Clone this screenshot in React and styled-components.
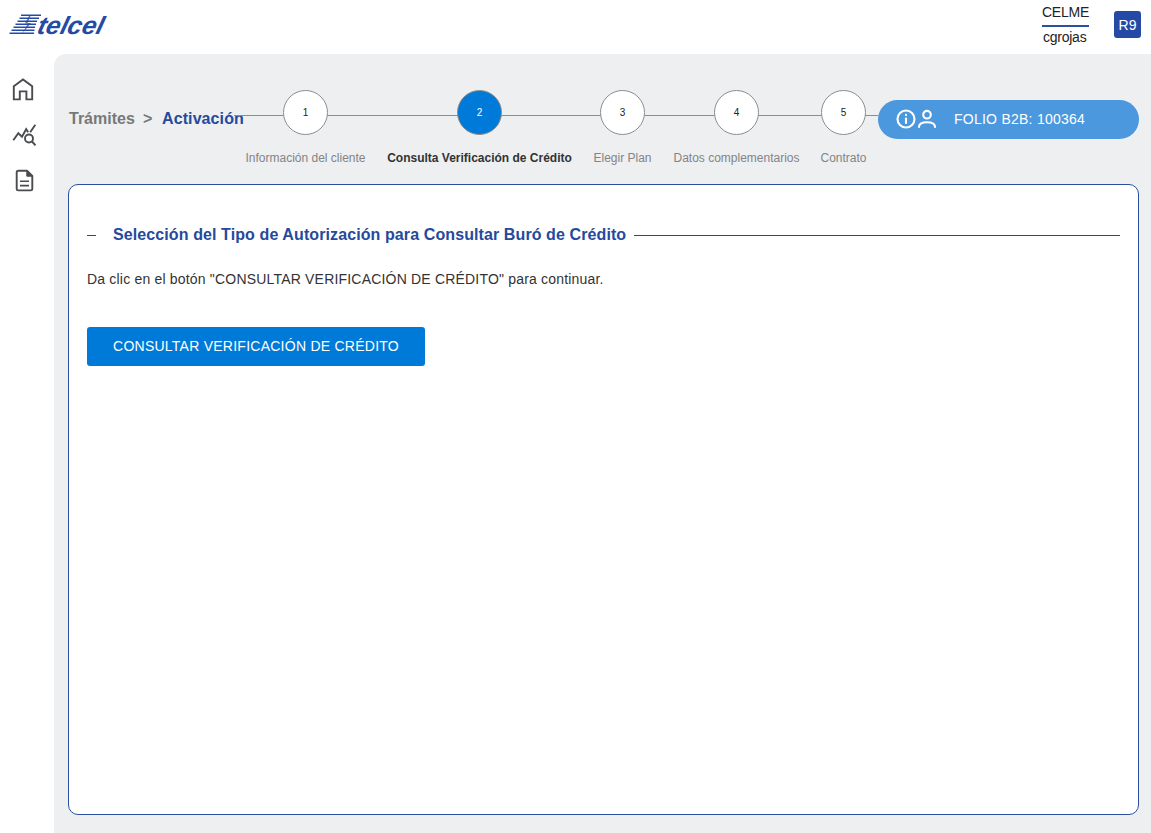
import React from "react";
import styled, { createGlobalStyle } from "styled-components";

const GlobalStyle = createGlobalStyle`
  *, *::before, *::after { box-sizing: border-box; }
  body {
    margin: 0;
    background: #fff;
    font-family: "Liberation Sans", Arial, sans-serif;
    color: #333;
  }
`;

const Page = styled.div`
  display: flex;
  flex-direction: column;
  height: 833px;
  width: 1151px;
  overflow: hidden;
`;

const Header = styled.header`
  display: flex;
  align-items: flex-start;
  justify-content: space-between;
  height: 54px;
  padding: 0 10px 0 9px;
`;

const Logo = styled.svg`
  display: block;
  width: 102px;
  height: 30px;
  margin-top: 10px;
`;

const Account = styled.div`
  display: flex;
  gap: 25px;
`;

const UserInfo = styled.div`
  width: 47px;
  padding-top: 4px;
  font-size: 14px;
  line-height: 17px;
  letter-spacing: -0.25px;
  color: #222;
  white-space: nowrap;
`;

const UserGroup = styled.div`
  height: 23px;
  border-bottom: 2px solid #2b50a0;
`;

const UserName = styled.div`
  padding: 2px 0 0 1px;
`;

const Avatar = styled.div`
  width: 27px;
  height: 27px;
  margin-top: 11px;
  border-radius: 3px;
  background: #254aa5;
  color: #fff;
  font-size: 14px;
  line-height: 28px;
  text-align: center;
`;

const Body = styled.div`
  display: flex;
  flex: 1;
  min-height: 0;
`;

const Sidebar = styled.nav`
  display: flex;
  flex-direction: column;
  gap: 22px;
  width: 54px;
  padding: 23px 0 0 11px;
`;

const NavIcon = styled.svg`
  display: block;
  width: 26px;
  height: 24px;
  fill: none;
  stroke: #4a4c4f;
  stroke-width: 1.9;
`;

const Main = styled.main`
  display: flex;
  flex: 1;
  flex-direction: column;
  min-width: 0;
  padding: 0 12px 18px 14px;
  border-top-left-radius: 12px;
  background: #edeff1;
`;

const TopBar = styled.div`
  display: flex;
  align-items: flex-start;
  height: 130px;
`;

const Breadcrumb = styled.div`
  display: flex;
  width: 166px;
  padding: 55px 0 0 1px;
  font-size: 16px;
  font-weight: 700;
  line-height: 19px;
  white-space: nowrap;
  color: #77787a;
`;

const Crumb = styled.span`
  flex: none;
  width: ${(p) => p.$width}px;
  letter-spacing: ${(p) => p.$spacing || 0}px;
  color: ${(p) => (p.$current ? "#254a9c" : "inherit")};
`;

const Steps = styled.ol`
  display: flex;
  width: 644px;
  margin: 36px 0 0;
  padding: 0;
  list-style: none;
  background: linear-gradient(#8b8e90, #8b8e90) 0 25px / 100% 1px no-repeat;
`;

const Step = styled.li`
  display: flex;
  flex-direction: column;
  align-items: center;
  width: ${(p) => p.$width}px;
`;

const StepNumber = styled.span`
  width: 45px;
  height: 45px;
  border: 1px solid #8b8e90;
  border-radius: 50%;
  background: ${(p) => (p.$active ? "#007ad9" : "#fff")};
  color: ${(p) => (p.$active ? "#fff" : "#222")};
  font-size: 10px;
  line-height: 44px;
  text-align: center;
`;

const StepLabel = styled.span`
  margin-top: 16px;
  font-size: 12px;
  line-height: 15px;
  white-space: nowrap;
  font-weight: ${(p) => (p.$active ? 700 : 400)};
  color: ${(p) => (p.$active ? "#333" : "#848484")};
`;

const Folio = styled.div`
  display: flex;
  align-items: center;
  flex: 1;
  height: 39px;
  margin-top: 46px;
  padding: 0 0 1px 17px;
  border-radius: 20px;
  background: #4b98de;
  color: #fff;
  font-size: 14px;
  letter-spacing: 0.25px;
  white-space: nowrap;
`;

const FolioIcons = styled.svg`
  width: 43px;
  height: 22px;
  margin-right: 16px;
  fill: none;
  stroke: #fff;
  stroke-width: 2.1;
  stroke-linecap: round;
`;

const Panel = styled.section`
  flex: 1;
  padding: 40px 18px 0;
  border: 1px solid #2b4f9e;
  border-radius: 10px;
  background: #fff;
`;

const Legend = styled.h2`
  display: flex;
  align-items: center;
  margin: 0;
  height: 20px;
  font-size: 16px;
  font-weight: 700;
  color: #254a9c;
  white-space: nowrap;

  &::before,
  &::after {
    content: "";
    height: 1px;
    margin-top: 1px;
    background: #254a8c;
  }
  &::before { width: 9px; margin-right: 17px; }
  &::after { flex: 1; margin-left: 8px; }
`;

const LegendText = styled.span`
  width: 513px;
  letter-spacing: 0.1px;
`;

const Instructions = styled.p`
  margin: 26px 0 0;
  font-size: 14px;
  line-height: 17px;
  letter-spacing: 0.19px;
  color: #333;
`;

const Button = styled.button`
  display: block;
  width: 338px;
  height: 39px;
  margin-top: 39px;
  padding: 0 0 2px;
  border: 0;
  border-radius: 3px;
  background: #007ad9;
  color: #fff;
  font-family: inherit;
  font-size: 14px;
  letter-spacing: 0.25px;
`;

const steps = [
  { label: "Información del cliente", width: 143 },
  { label: "Consulta Verificación de Crédito", width: 205, active: true },
  { label: "Elegir Plan", width: 81 },
  { label: "Datos complementarios", width: 147 },
  { label: "Contrato", width: 67 },
];

function TelcelLogo() {
  return (
    <Logo viewBox="0 0 102 30" role="img" aria-label="telcel">
      <path
        d="M12 5.2H32M10.5 8.2H30M8.5 11.2H28M6.5 14.2H27M4.5 17.2H26M2.5 20.2H25.5M0.5 23.2H25"
        stroke="#254aa5"
        strokeWidth="1.5"
      />
      <path
        d="M20.5 5L16 13.5H19L13 24L22 13H18.5L22 5Z"
        fill="#254aa5"
        fillOpacity="0.75"
      />
      <text
        x="0"
        y="0"
        transform="translate(27 24) skewX(-14)"
        fontSize="25"
        fontWeight="700"
        fontStyle="italic"
        textLength="66"
        lengthAdjust="spacingAndGlyphs"
        fill="#254aa5"
      >
        telcel
      </text>
    </Logo>
  );
}

export default function App() {
  return (
    <>
      <GlobalStyle />
      <Page>
        <Header>
          <TelcelLogo />
          <Account>
            <UserInfo>
              <UserGroup>CELME</UserGroup>
              <UserName>cgrojas</UserName>
            </UserInfo>
            <Avatar>R9</Avatar>
          </Account>
        </Header>
        <Body>
          <Sidebar>
            <NavIcon viewBox="0 0 26 24">
              <path d="M2.8 9.2L12 2.4L21.2 9.2V22.4H15.4V14.4H8.8V22.4H2.8Z" />
            </NavIcon>
            <NavIcon viewBox="0 0 26 24">
              <path d="M2.3 17.3L7.3 10.2L11 13.8L15.2 6.2L17.2 9.2M19.2 9.2L24.3 1.8" />
              <circle cx="18" cy="15.5" r="4" />
              <path d="M21 18.5L24.5 22.3" />
            </NavIcon>
            <NavIcon viewBox="0 0 26 24">
              <path d="M7 1.7H16L21.3 7V19.9Q21.3 21.4 19.8 21.4H7.2Q5.7 21.4 5.7 19.9V3.2Q5.7 1.7 7.2 1.7Z" />
              <path d="M15.8 1.7V7.2H21.3Z" fill="#4a4c4f" strokeWidth="1" />
              <path d="M9 12.3H18M9 16.6H18" strokeWidth="1.6" />
            </NavIcon>
          </Sidebar>
          <Main>
            <TopBar>
              <Breadcrumb>
                <Crumb $width={74}>Trámites</Crumb>
                <Crumb $width={19}>&gt;</Crumb>
                <Crumb $width={82} $spacing={0.1} $current>Activación</Crumb>
              </Breadcrumb>
              <Steps>
                {steps.map((step, i) => (
                  <Step key={step.label} $width={step.width}>
                    <StepNumber $active={step.active}>{i + 1}</StepNumber>
                    <StepLabel $active={step.active}>{step.label}</StepLabel>
                  </Step>
                ))}
              </Steps>
              <Folio>
                <FolioIcons viewBox="0 0 43 22">
                  <circle cx="11" cy="11" r="8.5" />
                  <path d="M11 10.5V15" />
                  <path d="M11 6.9V7.1" />
                  <circle cx="32" cy="6.7" r="3.8" />
                  <path d="M24 19C24 15.8 27.2 14.2 32 14.2S40 15.8 40 19" />
                </FolioIcons>
                FOLIO B2B: 100364
              </Folio>
            </TopBar>
            <Panel>
              <Legend>
                <LegendText>Selección del Tipo de Autorización para Consultar Buró de Crédito</LegendText>
              </Legend>
              <Instructions>
                Da clic en el botón "CONSULTAR VERIFICACIÓN DE CRÉDITO" para continuar.
              </Instructions>
              <Button>CONSULTAR VERIFICACIÓN DE CRÉDITO</Button>
            </Panel>
          </Main>
        </Body>
      </Page>
    </>
  );
}
